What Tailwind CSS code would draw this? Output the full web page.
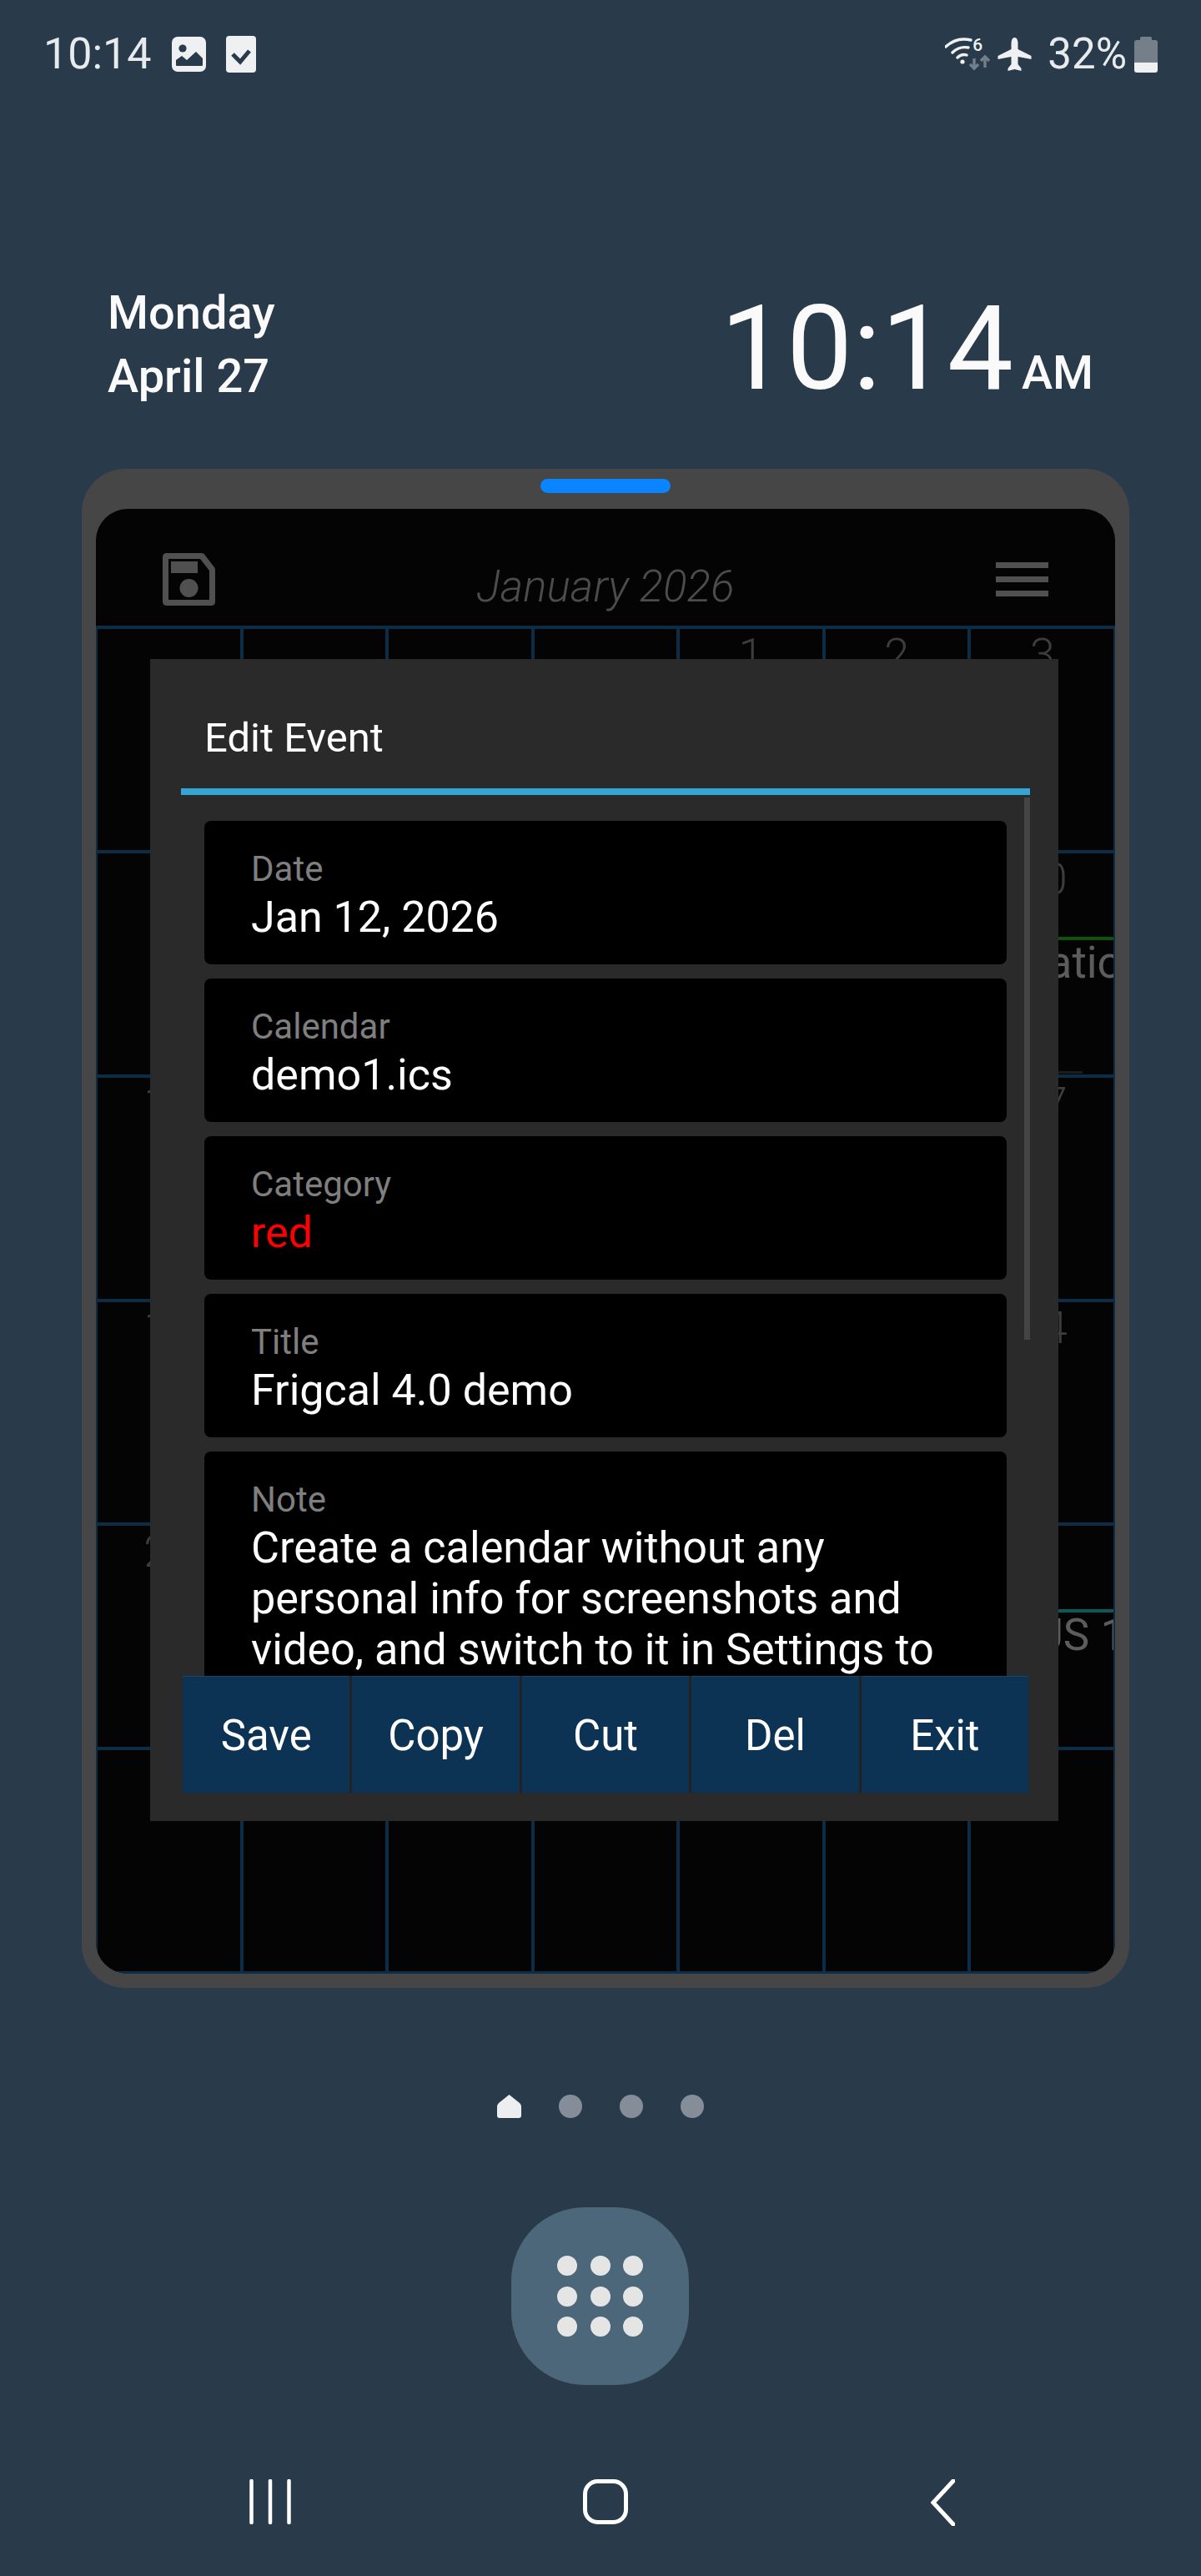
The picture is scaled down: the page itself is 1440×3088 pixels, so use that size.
<!DOCTYPE html>
<html lang="en">
<head>
  <meta charset="UTF-8" />
  <title>Frigcal edit event</title>
  <script src="https://cdn.jsdelivr.net/npm/@tailwindcss/browser@4"></script>
</head>
<body class="w-[1440px] h-[3088px] overflow-hidden bg-[#293a4b] text-white font-['Roboto',sans-serif] flex flex-col">

  <!-- status bar -->
  <div class="h-[130px] shrink-0 pl-[52px] pr-[52px] pt-[36px] flex justify-between items-start">
    <div class="flex items-center h-[58px]">
      <span class="text-[52px] leading-[58px] font-normal text-[#e8ebee]">10:14</span>
      <svg class="ml-[24px] w-[41px] h-[42px]" viewBox="0 0 41 42"><rect width="41" height="42" rx="7" fill="#eef0f2"/><circle cx="13" cy="14" r="4.6" fill="#293a4b"/><path d="M5 34v-6l7-5 6 5 11-10 8 8v8q0 1-1 1H6q-1 0-1-1z" fill="#293a4b"/></svg>
      <svg class="ml-[24px] w-[36px] h-[44px]" viewBox="0 0 36 44"><rect width="36" height="44" rx="4" fill="#eef0f2"/><path d="M8 22l9 9 11-13" fill="none" stroke="#293a4b" stroke-width="5"/></svg>
    </div>
    <div class="flex items-center h-[58px]">
      <div class="relative w-[54px] h-[40px]">
        <svg class="w-[54px] h-[40px]" viewBox="0 0 54 40">
          <path d="M1 11Q14-1 31 3M9 18Q17 10 28 12M15 24Q20 19 26 21" fill="none" stroke="#eef0f2" stroke-width="3.4" stroke-linecap="round"/>
          <circle cx="21" cy="29" r="2.6" fill="#eef0f2"/>
          <path d="M35 25v12M30 32l5 5 5-5M48 36V24M43 28l5-5 5 5" fill="none" stroke="#747f8a" stroke-width="3.4"/>
        </svg>
        <span class="absolute left-[33px] top-[-2px] text-[21px] leading-[22px] font-medium text-[#eef0f2]">6</span>
      </div>
      <svg class="ml-[9px] w-[41px] h-[40px]" viewBox="0 0 41 40"><path d="M20.5 0q4 0 4 8v6l16 8v4l-16-3v9l4 5v3l-8-2-8 2v-3l4-5v-9L.5 26v-4l16-8V8q0-8 4-8z" fill="#eef0f2"/></svg>
      <span class="ml-[19px] text-[51px] leading-[58px] font-normal text-[#e8ebee]">32%</span>
      <div class="ml-[9px] w-[28px] h-[43px] flex flex-col items-center">
        <div class="w-[14px] h-[4px] rounded-t-[2px] bg-[#747f8a]"></div>
        <div class="w-[28px] h-[39px] rounded-[3px] overflow-hidden flex flex-col">
          <div class="h-[27px] bg-[#747f8a]"></div>
          <div class="flex-1 bg-[#eef0f2]"></div>
        </div>
      </div>
    </div>
  </div>

  <!-- clock row -->
  <div class="h-[432px] shrink-0 pl-[129px] pr-[129px] pt-[210px] flex justify-between items-start">
    <div class="text-[56px] leading-[76px] font-medium text-[#fafafa] mt-[-3px]">
      <div>Monday</div>
      <div>April 27</div>
    </div>
    <div class="flex items-baseline text-[#fafafa] mt-[8px]">
      <span class="text-[141px] leading-[140px] font-normal">10:14</span>
      <span class="ml-[10px] text-[56px] leading-[55px] font-medium">AM</span>
    </div>
  </div>

  <!-- app window -->
  <div class="mx-[98px] h-[1821px] w-[1256px] shrink-0 rounded-[52px] bg-[#464646] px-[17px] pb-[17px] flex flex-col items-center">
    <div class="h-[48px] shrink-0 pt-[12px]">
      <div class="w-[156px] h-[17px] rounded-full bg-[#0a84ff]"></div>
    </div>
    <div class="relative w-full flex-1 rounded-[38px] overflow-hidden bg-[#040404] flex flex-col">

      <!-- app toolbar -->
      <div class="h-[140px] shrink-0 relative flex items-start justify-between pl-[80px] pr-[80px] pt-[53px]">
        <svg class="w-[63px] h-[63px]" viewBox="0 0 63 63"><path d="M5 0h42q2 0 3 1.500L62 17q1 1.500 1 3v38q0 5-5 5H5q-5 0-5-5V5q0-5 5-5z" fill="#505050"/><path d="M7 7h38l11 14v35H7z" fill="#040404"/><path d="M10 10h32v14H10z" fill="#505050"/><circle cx="31.500" cy="42" r="11" fill="#505050"/></svg>
        <span class="absolute left-0 right-0 top-[65px] text-center italic font-light text-[53px] leading-[56px] text-[#4c4c4c]">January 2026</span>
        <div class="flex flex-col gap-[10px] mt-[11px]">
          <div class="w-[63px] h-[7px] bg-[#505050]"></div>
          <div class="w-[63px] h-[7px] bg-[#505050]"></div>
          <div class="w-[63px] h-[7px] bg-[#505050]"></div>
        </div>
      </div>

      <!-- month grid, dimmed behind the dialog -->
      <div class="flex-1 grid grid-cols-7 grid-rows-6 gap-[4px] bg-[#0d2d47] pt-[4px] px-[2px] pb-[3px] text-[54px] leading-[56px] text-[#3d3d3d] text-center font-light *:bg-[#040404] *:pt-[3px] *:overflow-hidden">
        <div></div><div></div><div></div><div></div><div>1</div><div>2</div><div>3</div>
        <div>4</div><div>5</div><div>6</div><div>7</div><div>8</div><div>9</div>
        <div>10
          <div class="mt-[41px] border-t-[4px] border-[#0b550b] pl-[3px] text-left font-normal text-[53px] leading-[54px] text-[#5c5c5c] whitespace-nowrap">Vacation</div>
          <div class="mt-[103px] ml-[100px] h-[3px] w-[34px] bg-[#1c1c1c]"></div>
        </div>
        <div>11</div><div>12</div><div>13</div><div>14</div><div>15</div><div>16</div><div>17</div>
        <div>18</div><div>19</div><div>20</div><div>21</div><div>22</div><div>23</div><div>24</div>
        <div>25</div><div>26</div><div>27</div><div>28</div><div>29</div><div>30</div>
        <div>31
          <div class="mt-[41px] border-t-[4px] border-[#0a5a55] pl-[76px] text-left font-normal text-[53px] leading-[54px] text-[#5c5c5c] whitespace-nowrap">US 1</div>
        </div>
        <div></div><div></div><div></div><div></div><div></div><div></div><div></div>
      </div>

      <!-- edit dialog -->
      <div class="absolute left-[65px] top-[180px] w-[1089px] h-[1393px] bg-[#2a2a2a] flex flex-col overflow-hidden">
        <div class="h-[155px] shrink-0 pl-[65px] pt-[67px] text-[49px] leading-[56px]">Edit Event</div>
        <div class="ml-[37px] mr-[34px] h-[8px] shrink-0 bg-[#33a5d6]"></div>
        <div class="relative flex-1 min-h-0">
          <div class="absolute right-[34px] top-[3px] w-[7px] h-[650px] bg-[#444444]"></div>
          <div class="ml-[65px] w-[962px] pt-[31px] flex flex-col gap-[17px]">
            <div class="h-[172px] rounded-[8px] bg-black pl-[56px] pt-[34px]">
              <div class="text-[42px] leading-[48px] text-[#7f7f7f]">Date</div>
              <div class="mt-[3px] text-[52px] leading-[61px]">Jan 12, 2026</div>
            </div>
            <div class="h-[172px] rounded-[8px] bg-black pl-[56px] pt-[34px]">
              <div class="text-[42px] leading-[48px] text-[#7f7f7f]">Calendar</div>
              <div class="mt-[3px] text-[52px] leading-[61px]">demo1.ics</div>
            </div>
            <div class="h-[172px] rounded-[8px] bg-black pl-[56px] pt-[34px]">
              <div class="text-[42px] leading-[48px] text-[#7f7f7f]">Category</div>
              <div class="mt-[3px] text-[52px] leading-[61px] text-[#f00]">red</div>
            </div>
            <div class="h-[172px] rounded-[8px] bg-black pl-[56px] pt-[34px]">
              <div class="text-[42px] leading-[48px] text-[#7f7f7f]">Title</div>
              <div class="mt-[3px] text-[52px] leading-[61px]">Frigcal 4.0 demo</div>
            </div>
            <div class="h-[400px] rounded-[8px] bg-black pl-[56px] pt-[34px]">
              <div class="text-[42px] leading-[48px] text-[#7f7f7f]">Note</div>
              <div class="mt-[3px] text-[52.2px] leading-[61px]">Create a calendar without any<br>personal info for screenshots and<br>video, and switch to it in Settings to</div>
            </div>
          </div>
          <div class="absolute left-[39px] bottom-[34px] w-[1014px] h-[140px] bg-[#222222] flex gap-[3px] text-[51px] *:flex-1 *:bg-[#0d3354] *:flex *:items-center *:justify-center *:pt-[4px] *:border-t *:border-[#15466b]">
            <div>Save</div>
            <div>Copy</div>
            <div>Cut</div>
            <div>Del</div>
            <div>Exit</div>
          </div>
        </div>
      </div>
    </div>
  </div>

  <!-- page dots -->
  <div class="h-[263px] shrink-0 pt-[128px] pl-[596px] flex gap-[45px] items-start">
    <svg class="w-[29px] h-[28px]" viewBox="0 0 29 28"><path d="M14.500 0L27 10q2 2 2 4v11q0 3-3 3H3q-3 0-3-3V14q0-2 2-4z" fill="#eceef0"/></svg>
    <div class="w-[28px] h-[28px] rounded-full bg-[#858e98]"></div>
    <div class="w-[28px] h-[28px] rounded-full bg-[#858e98]"></div>
    <div class="w-[28px] h-[28px] rounded-full bg-[#858e98]"></div>
  </div>

  <!-- apps button -->
  <div class="shrink-0 ml-[613px] w-[213px] h-[213px] rounded-[88px] bg-[#4b6779] grid grid-cols-[24px_24px_24px] gap-x-[15.5px] gap-y-[12.5px] content-center justify-center *:w-[24px] *:h-[24px] *:rounded-full *:bg-[#e5e5e5]">
    <div></div><div></div><div></div>
    <div></div><div></div><div></div>
    <div></div><div></div><div></div>
  </div>

  <!-- navigation bar -->
  <div class="shrink-0 mt-[113px] pl-[299px] flex items-start">
    <svg class="w-[50px] h-[54px]" viewBox="0 0 50 54"><path d="M2.500 2v50M25 2v50M47.500 2v50" stroke="#fff" stroke-width="4.500" stroke-linecap="round"/></svg>
    <svg class="ml-[350px] w-[54px] h-[54px]" viewBox="0 0 54 54"><rect x="2.500" y="2.500" width="49" height="49" rx="15" fill="none" stroke="#fff" stroke-width="5"/></svg>
    <svg class="ml-[363px] w-[29px] h-[56px]" viewBox="0 0 29 56"><path d="M27 2L3 28l24 26" fill="none" stroke="#fff" stroke-width="5" stroke-linecap="round"/></svg>
  </div>
</body>
</html>
